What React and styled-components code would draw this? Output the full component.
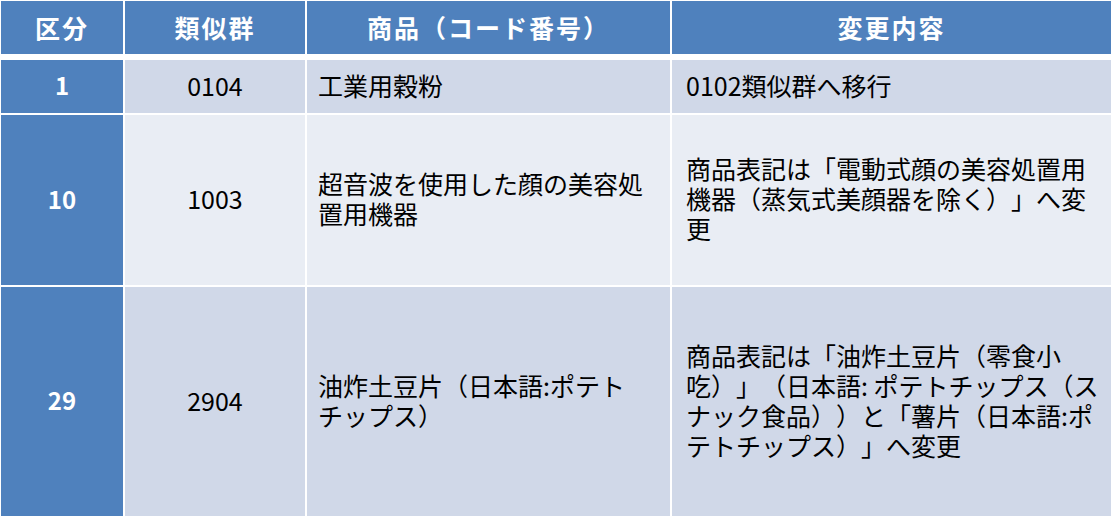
import styled, { createGlobalStyle } from "styled-components";

const GlobalStyle = createGlobalStyle`
    html, body {
        margin: 0;
        padding: 0;
        background: #ffffff;
        overflow: hidden;
    }
    body {
        font-family: "Noto Sans CJK JP", "Noto Sans", sans-serif;
        text-spacing-trim: space-all;
    }
`;

// lines are kept as in the source slide so wrapping matches
const ROWS = [
    {
        cls: "1",
        group: "0104",
        goods: ["工業用穀粉"],
        change: ["0102類似群へ移行"],
        height: 53,
        tone: "dark",
    },
    {
        cls: "10",
        group: "1003",
        goods: ["超音波を使用した顔の美容処", "置用機器"],
        change: ["商品表記は「電動式顔の美容処置用", "機器（蒸気式美顔器を除く）」へ変", "更"],
        height: 170,
        tone: "light",
    },
    {
        cls: "29",
        group: "2904",
        goods: ["油炸土豆片（日本語:ポテト", "チップス）"],
        change: [
            "商品表記は「油炸土豆片（零食小",
            "吃）」（日本語: ポテトチップス（ス",
            "ナック食品））と「薯片（日本語:ポ",
            "テトチップス）」へ変更",
        ],
        height: 229,
        tone: "dark",
    },
];

const App = () => {
    return (
        <>
            <GlobalStyle />
            <Table>
                <Row $height={53} $head>
                    <HeadCell>区分</HeadCell>
                    <HeadCell>類似群</HeadCell>
                    <HeadCell>商品（コード番号）</HeadCell>
                    <HeadCell>変更内容</HeadCell>
                </Row>
                {ROWS.map(r => (
                    <Row key={r.cls} $height={r.height}>
                        <KeyCell>{r.cls}</KeyCell>
                        <BodyCell $tone={r.tone} $center>{r.group}</BodyCell>
                        <BodyCell $tone={r.tone}>
                            <Lines>{r.goods.map((l, i) => <Line key={i}>{l}</Line>)}</Lines>
                        </BodyCell>
                        <BodyCell $tone={r.tone} $pad={14}>
                            <Lines>{r.change.map((l, i) => <Line key={i}>{l}</Line>)}</Lines>
                        </BodyCell>
                    </Row>
                ))}
            </Table>
        </>
    );
};

export default App;

const Table = styled.div`
    display: flex;
    flex-direction: column;
    gap: 2px;
    width: 1111px;
    height: 516px;
    padding: 1px 0 0 1px;
    box-sizing: border-box;
    overflow: hidden;
`;

const Row = styled.div`
    display: grid;
    grid-template-columns: 122px 180px 363px 1fr;
    column-gap: 2px;
    height: ${p => p.$height}px;
    flex-shrink: 0;
    margin-bottom: ${p => (p.$head ? 4 : 0)}px;
`;

const HeadCell = styled.div`
    display: flex;
    align-items: center;
    justify-content: center;
    background: #4f81bd;
    color: #ffffff;
    font-weight: 700;
    font-size: 25px;
    letter-spacing: 2px;
    padding-bottom: 2px;
`;

const KeyCell = styled.div`
    display: flex;
    align-items: center;
    justify-content: center;
    background: #4f81bd;
    color: #ffffff;
    font-weight: 700;
    font-size: 24px;
    padding-bottom: 4px;
`;

const BodyCell = styled.div`
    display: flex;
    align-items: center;
    justify-content: ${p => (p.$center ? "center" : "flex-start")};
    background: ${p => (p.$tone === "dark" ? "#d0d8e8" : "#e9edf4")};
    color: #000000;
    font-size: 25px;
    line-height: 30px;
    padding: 0 ${p => p.$pad || 11}px 4px;
    min-width: 0;
`;

const Lines = styled.div`
    display: flex;
    flex-direction: column;
`;

const Line = styled.span`
    white-space: nowrap;
`;
